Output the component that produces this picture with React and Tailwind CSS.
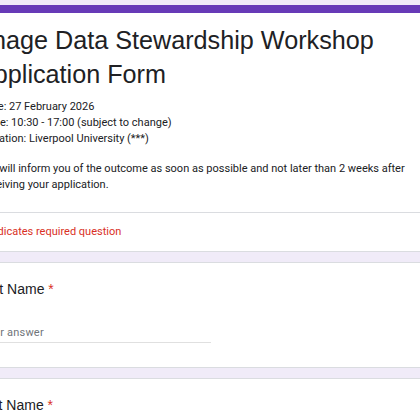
export default function App() {
  return (
    <div className="h-[420px] w-[420px] overflow-hidden bg-[#f0ebf8] pt-[5px]">
      <div className="-ml-[44px] flex w-[520px] flex-col gap-[10px]">
        {/* Header card */}
        <div className="rounded-lg border border-t-[8px] border-[#dadce0] border-t-[#673ab7] bg-white">
          <div className="w-[498px] px-6 pb-[19px] pt-[10px]">
            <h1 className="-ml-[4px] -indent-[20px] font-['Liberation_Sans',Arial,sans-serif] text-[25.2px] leading-[34px] text-[#202124]">
              Manage Data Stewardship Workshop Application Form
            </h1>
            <div className="mt-[8px] font-['Roboto',sans-serif] text-[11px] leading-[16px] text-[#202124]">
              <p>Date: 27 February 2026</p>
              <p>Time: 10:30 - 17:00 (subject to change)</p>
              <p>Location: Liverpool University (***)</p>
              <p className="mt-[14px]">
                We will inform you of the outcome as soon as possible and not later than 2 weeks after receiving your application.
              </p>
            </div>
          </div>
          <div className="border-t border-[#dadce0] px-6 py-[11px] font-['Roboto',sans-serif] text-[11px] leading-[16px] text-[#d93025]">
            * Indicates required question
          </div>
        </div>

        {['First Name', 'Last Name'].map((label) => (
          <div key={label} className="rounded-lg border border-[#dadce0] bg-white px-6 pb-[24px] pt-[17px]">
            <div className="-ml-[5px] font-['Liberation_Sans',Arial,sans-serif] text-[14px] leading-[18px] text-[#202124]">
              {label} <span className="text-[#d93025]">*</span>
            </div>
            <div className="mt-[27px] w-[230px] border-b border-[#e0e0e0] pb-[1px] font-['Roboto',sans-serif] text-[11px] leading-[16px] tracking-[0.2px] text-[#70757a]">
              Your answer
            </div>
          </div>
        ))}
      </div>
    </div>
  );
}
